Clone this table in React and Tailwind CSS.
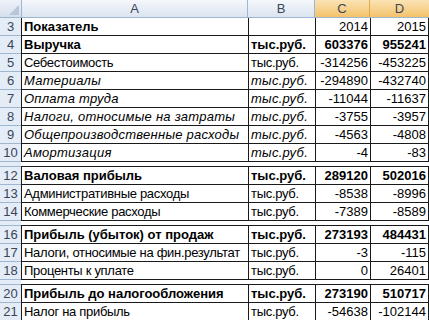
import React from "react";

const rows = [
  { n: 3, a: "Показатель", b: "", c: "2014", d: "2015", bold: "a" },
  { n: 4, a: "Выручка", b: "тыс.руб.", c: "603376", d: "955241", bold: "all" },
  { n: 5, a: "Себестоимость", b: "тыс.руб.", c: "-314256", d: "-453225" },
  { n: 6, a: "Материалы", b: "тыс.руб.", c: "-294890", d: "-432740", italic: true },
  { n: 7, a: "Оплата труда", b: "тыс.руб.", c: "-11044", d: "-11637", italic: true },
  { n: 8, a: "Налоги, относимые на затраты", b: "тыс.руб.", c: "-3755", d: "-3957", italic: true },
  { n: 9, a: "Общепроизводственные расходы", b: "тыс.руб.", c: "-4563", d: "-4808", italic: true },
  { n: 10, a: "Амортизация", b: "тыс.руб.", c: "-4", d: "-83", italic: true, gap: true },
  { n: 12, a: "Валовая прибыль", b: "тыс.руб.", c: "289120", d: "502016", bold: "all" },
  { n: 13, a: "Административные расходы", b: "тыс.руб.", c: "-8538", d: "-8996" },
  { n: 14, a: "Коммерческие расходы", b: "тыс.руб.", c: "-7389", d: "-8589", gap: true },
  { n: 16, a: "Прибыль (убыток) от продаж", b: "тыс.руб.", c: "273193", d: "484431", bold: "all" },
  { n: 17, a: "Налоги, относимые на фин.результат", b: "тыс.руб.", c: "-3", d: "-115" },
  { n: 18, a: "Проценты к уплате", b: "тыс.руб.", c: "0", d: "26401", gap: true },
  { n: 20, a: "Прибыль до налогообложения", b: "тыс.руб.", c: "273190", d: "510717", bold: "all" },
  { n: 21, a: "Налог на прибыль", b: "тыс.руб.", c: "-54638", d: "-102144" },
];

// text style for a label cell: bold / italic / plain (plain is a bit tighter, like Calibri)
function labelCls(bold, italic) {
  if (bold) return "font-bold";
  if (italic) return "italic tracking-[0.25px]";
  return "tracking-[-0.3px]";
}

function Row({ r }) {
  const allBold = r.bold === "all";
  return (
    <>
      <div className="flex h-[18px]">
        <div className="w-[21px] shrink-0 bg-[#e4ecf7] border-b border-[#9eb6ce] text-center text-[#3a4556] leading-[17px]">
          {r.n}
        </div>
        <div
          className={`w-[227px] shrink-0 border-l border-b border-[#1a1a1a] pl-[2px] leading-[17px] whitespace-nowrap ${labelCls(
            r.bold,
            r.italic
          )}`}
        >
          {r.a}
        </div>
        <div
          className={`w-[67px] shrink-0 border-l border-b border-[#1a1a1a] bg-white pl-[2px] leading-[17px] ${labelCls(
            allBold,
            r.italic
          )}`}
        >
          {r.b}
        </div>
        <div
          className={`w-[55px] shrink-0 border-l border-b border-[#1a1a1a] pr-[2px] text-right leading-[17px] ${
            allBold ? "font-bold" : ""
          }`}
        >
          {r.c}
        </div>
        <div
          className={`w-[59px] shrink-0 border-l border-r border-b border-[#1a1a1a] pr-[2px] text-right leading-[17px] ${
            allBold ? "font-bold" : ""
          }`}
        >
          {r.d}
        </div>
      </div>
      {r.gap && (
        <div className="flex h-[5px]">
          <div className="w-[21px] shrink-0 bg-[#e4ecf7] border-b border-[#9eb6ce]" />
          <div className="w-[408px] shrink-0 bg-white border-b border-[#1a1a1a]" />
        </div>
      )}
    </>
  );
}

export default function App() {
  return (
    <div
      className="w-[429px] h-[320px] overflow-hidden bg-white text-black text-[13px]"
      style={{ fontFamily: '"Liberation Sans", Arial, sans-serif' }}
    >
      {/* column header */}
      <div className="flex h-[18px] text-[#3b4555] border-b border-[#9eb6ce]">
        <div className="relative w-[22px] shrink-0 bg-gradient-to-b from-[#eef3fa] to-[#d5dfec] border-r border-[#9eb6ce]">
          <svg className="absolute right-[2px] bottom-[2px]" width="10" height="10" viewBox="0 0 10 10">
            <polygon points="10,0 10,10 0,10" fill="#b8c6d8" />
          </svg>
        </div>
        <div className="w-[226px] shrink-0 bg-gradient-to-b from-[#f4f7fb] to-[#dbe4f0] border-r border-[#9eb6ce] text-center leading-[17px]">
          A
        </div>
        <div className="w-[67px] shrink-0 bg-gradient-to-b from-[#f4f7fb] to-[#dbe4f0] border-r border-[#9eb6ce] text-center leading-[17px]">
          B
        </div>
        <div className="w-[55px] shrink-0 bg-gradient-to-b from-[#fbe3b4] to-[#f3c26a] border-r border-[#e0a94a] text-center leading-[17px]">
          C
        </div>
        <div className="w-[59px] shrink-0 bg-gradient-to-b from-[#fbe3b4] to-[#f3c26a] text-center leading-[17px]">
          D
        </div>
      </div>
      {rows.map((r) => (
        <Row key={r.n} r={r} />
      ))}
    </div>
  );
}
